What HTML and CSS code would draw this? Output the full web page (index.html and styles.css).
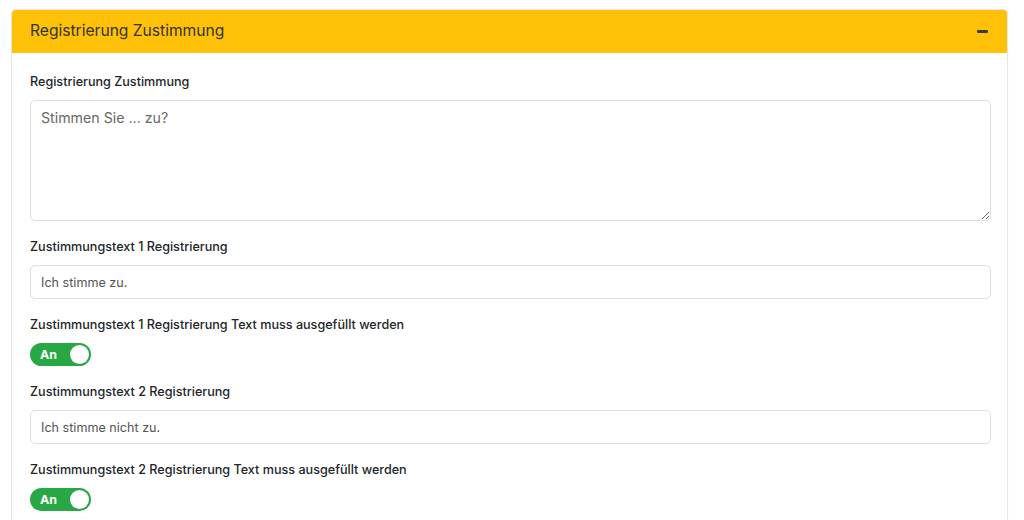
FILE: index.html
```html
<!DOCTYPE html>
<html lang="de">

<head>
    <meta charset="UTF-8">
    <meta name="viewport" content="width=device-width, initial-scale=1.0">
    <title>Registrierung Zustimmung</title>
    <link rel="stylesheet" href="styles.css">
</head>

<body>
    <div class="card">
        <div class="card-header">
            <h3 class="card-title">Registrierung Zustimmung</h3>
            <button class="collapse-btn" aria-label="Einklappen"><span></span></button>
        </div>
        <div class="card-body">
            <div class="form-group">
                <label for="consent">Registrierung Zustimmung</label>
                <textarea id="consent" class="form-control textarea">Stimmen Sie ... zu?</textarea>
            </div>
            <div class="form-group">
                <label for="text1">Zustimmungstext 1 Registrierung</label>
                <input type="text" id="text1" class="form-control" value="Ich stimme zu.">
            </div>
            <div class="form-group">
                <label>Zustimmungstext 1 Registrierung Text muss ausgefüllt werden</label>
                <div class="toggle on"><span class="toggle-text">An</span><span class="knob"></span></div>
            </div>
            <div class="form-group">
                <label for="text2">Zustimmungstext 2 Registrierung</label>
                <input type="text" id="text2" class="form-control" value="Ich stimme nicht zu.">
            </div>
            <div class="form-group">
                <label>Zustimmungstext 2 Registrierung Text muss ausgefüllt werden</label>
                <div class="toggle on"><span class="toggle-text">An</span><span class="knob"></span></div>
            </div>
        </div>
    </div>
</body>

</html>
```

FILE: styles.css
```css
body {
    font-family: 'Inter', 'Noto Sans', sans-serif;
    background-color: #fff;
    color: #212529;
    margin: 0;
    padding: 9px 16px 0 11px;
}

.card {
    border: 1px solid #e6e6e6;
    border-radius: 5px;
    background-color: #fff;
    box-shadow: 0 0 1px rgba(0, 0, 0, 0.08);
}

.card-header {
    background-color: #ffc107;
    border-radius: 4px 4px 0 0;
    height: 43px;
    display: flex;
    align-items: center;
    justify-content: space-between;
    padding: 0 19px 0 18px;
}

.card-title {
    margin: 0 0 2px 0;
    font-size: 15.6px;
    font-weight: 400;
    color: #333;
}

.collapse-btn {
    background: none;
    border: none;
    padding: 0;
    width: 12px;
    height: 12px;
    display: flex;
    align-items: center;
    justify-content: center;
    cursor: pointer;
}

.collapse-btn span {
    display: block;
    width: 11px;
    height: 3px;
    background-color: #3a3a3a;
    border-radius: 1px;
}

.card-body {
    padding: 19px 16px 0 18px;
}

.form-group {
    margin-bottom: 16px;
}

.form-group label {
    display: block;
    font-size: 12.6px;
    font-weight: 500;
    line-height: 20px;
    margin-bottom: 8px;
    color: #212529;
}

.form-control {
    display: block;
    box-sizing: border-box;
    width: 100%;
    height: 34px;
    padding: 6px 10px;
    font-family: inherit;
    font-size: 12.6px;
    color: #555;
    border: 1px solid #dcdfe3;
    border-radius: 5px;
    background-color: #fff;
}

.textarea {
    height: 121px;
    font-size: 14.2px;
    padding: 8px 10px;
    resize: vertical;
    color: #666;
}

.toggle {
    position: relative;
    width: 61px;
    height: 23px;
    margin-top: 1px;
    border-radius: 12px;
    background-color: #28a745;
    display: flex;
    align-items: center;
    box-sizing: border-box;
}

.toggle-text {
    color: #fff;
    font-size: 12.4px;
    font-weight: 700;
    margin-left: 10px;
}

.knob {
    position: absolute;
    top: 2px;
    right: 2px;
    width: 19px;
    height: 19px;
    border-radius: 50%;
    background-color: #fff;
}
```
